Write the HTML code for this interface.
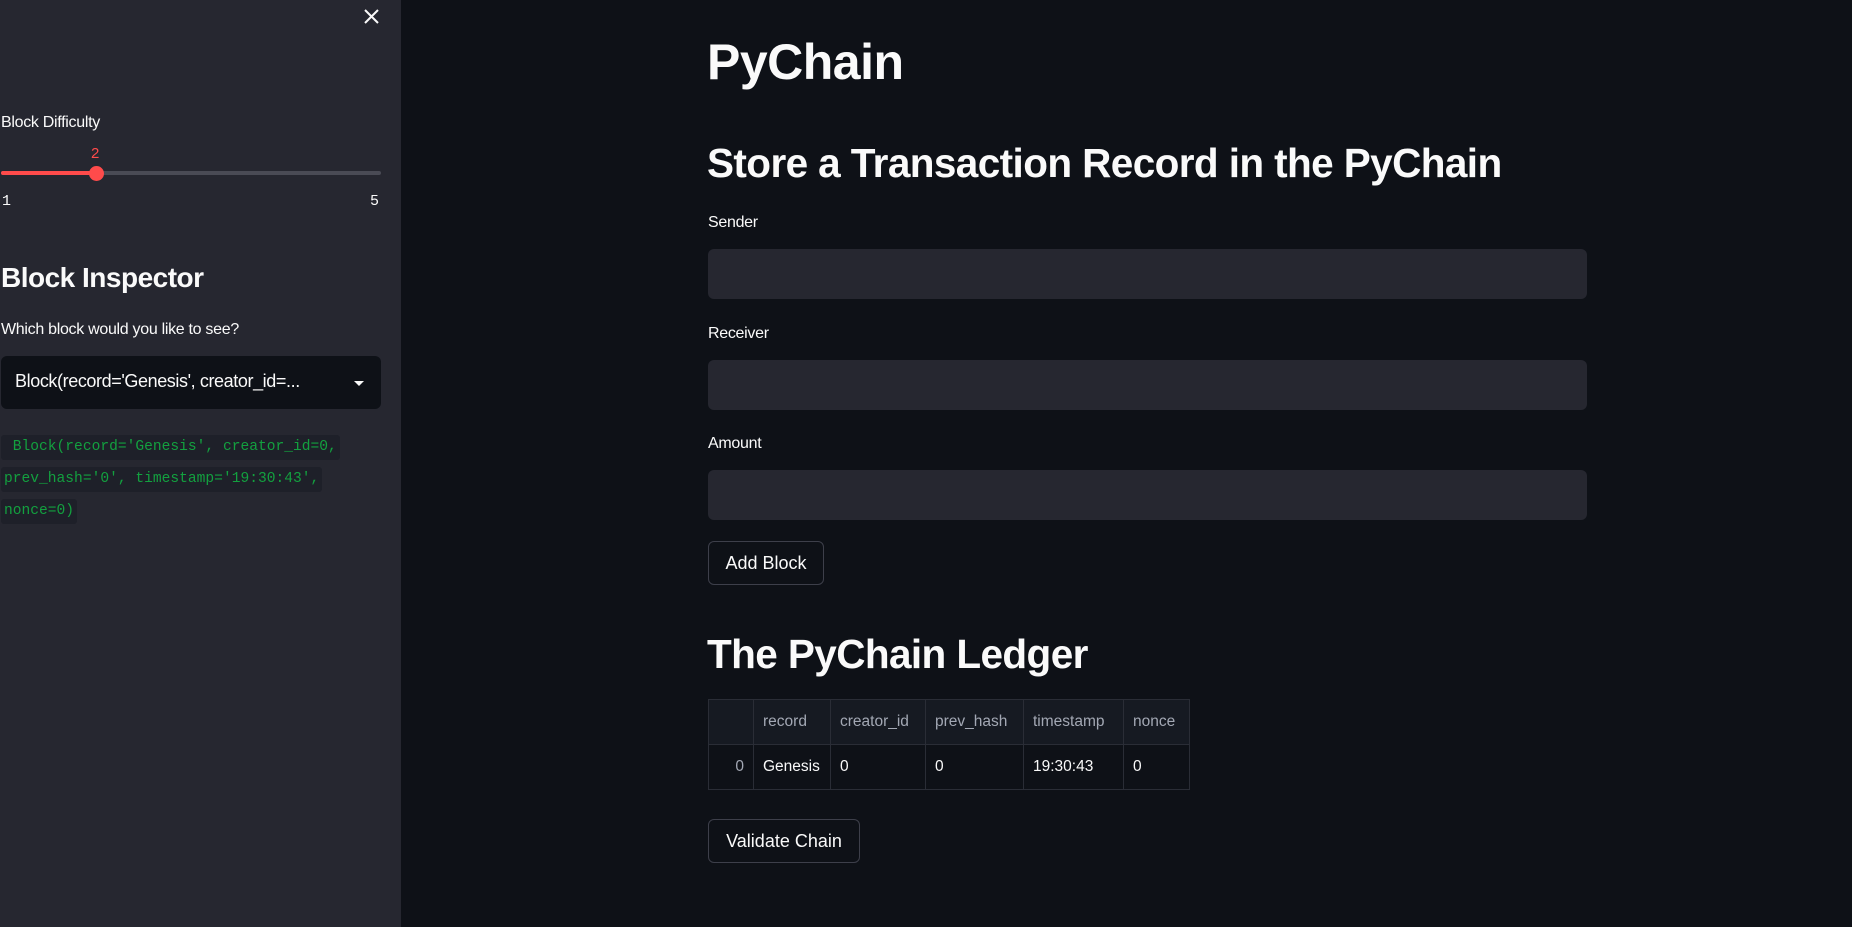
<!DOCTYPE html>
<html><head><style>
*{margin:0;padding:0;box-sizing:border-box}
body{width:1852px;height:927px;background:#0e1117;font-family:"Liberation Sans",sans-serif;color:#fafafa;position:relative;overflow:hidden}
.sb{position:absolute;left:0;top:0;width:401px;height:927px;background:#262730}
.a{position:absolute;white-space:nowrap}
.lbl{font-size:16px;letter-spacing:-0.3px}
.inp{position:absolute;left:708px;width:879px;height:50px;background:#262730;border-radius:6px}
.btn{position:absolute;left:708px;height:44px;border:1px solid #3d3f4a;border-radius:6px;font-size:18px;display:flex;align-items:center;justify-content:center;background:#0e1117}
.code{position:absolute;left:1px;background:#1e2029;color:#13a03f;font-family:"Liberation Mono",monospace;font-size:14.6px;height:25px;line-height:25px;padding:0 3px;border-radius:3px}
table{position:absolute;left:708px;top:699px;border-collapse:collapse;font-size:15.5px}
td{border:1px solid #2a2d36;height:45px;padding:0 9px}
tr.h td{color:#a3a8b4;background:#161a22}
</style></head><body>
<div class="sb">
<svg class="a" style="left:364px;top:9px" width="15" height="15" viewBox="0 0 15 15"><path d="M1 1L14 14M14 1L1 14" stroke="#fafafa" stroke-width="2"/></svg>
<div class="a lbl" style="left:1px;top:114px">Block Difficulty</div>
<div class="a" style="left:91px;top:145px;color:#ff4b4b;font-size:15px">2</div>
<div class="a" style="left:1px;top:171px;width:380px;height:4px;background:#4a4b55;border-radius:2px"></div>
<div class="a" style="left:1px;top:171px;width:95px;height:4px;background:#ff4b4b;border-radius:2px"></div>
<div class="a" style="left:89px;top:166px;width:15px;height:15px;background:#ff4b4b;border-radius:50%"></div>
<div class="a" style="left:2px;top:193px;font-size:15px;font-family:'Liberation Mono',monospace">1</div>
<div class="a" style="left:370px;top:193px;font-size:15px;font-family:'Liberation Mono',monospace">5</div>
<div class="a" style="left:1px;top:262px;font-size:28px;font-weight:bold;letter-spacing:-0.5px">Block Inspector</div>
<div class="a lbl" style="left:1px;top:321px">Which block would you like to see?</div>
<div class="a" style="left:1px;top:356px;width:380px;height:53px;background:#0e1117;border-radius:6px"></div>
<div class="a" style="left:15px;top:371px;font-size:18px;letter-spacing:-0.4px">Block(record='Genesis', creator_id=...</div>
<svg class="a" style="left:354px;top:381px" width="10" height="6"><path d="M0 0H10L5 5Z" fill="#fafafa"/></svg>
<div class="code" style="top:435px">&nbsp;Block(record='Genesis', creator_id=0,</div>
<div class="code" style="top:467px">prev_hash='0', timestamp='19:30:43',</div>
<div class="code" style="top:499px">nonce=0)</div>
</div>
<div class="a" style="left:707px;top:33px;font-size:50px;font-weight:bold;letter-spacing:-0.5px">PyChain</div>
<div class="a" style="left:707px;top:140px;font-size:40.5px;font-weight:bold;letter-spacing:-0.6px">Store a Transaction Record in the PyChain</div>
<div class="a lbl" style="left:708px;top:214px">Sender</div>
<div class="inp" style="top:249px"></div>
<div class="a lbl" style="left:708px;top:325px">Receiver</div>
<div class="inp" style="top:360px"></div>
<div class="a lbl" style="left:708px;top:435px">Amount</div>
<div class="inp" style="top:470px"></div>
<div class="btn" style="top:541px;width:116px">Add Block</div>
<div class="a" style="left:707px;top:631px;font-size:40.5px;font-weight:bold;letter-spacing:-0.6px">The PyChain Ledger</div>
<table>
<tr class="h"><td style="width:45px"></td><td style="width:77px">record</td><td style="width:95px">creator_id</td><td style="width:98px">prev_hash</td><td style="width:100px">timestamp</td><td style="width:66px">nonce</td></tr>
<tr><td style="text-align:right;color:#a3a8b4">0</td><td>Genesis</td><td>0</td><td>0</td><td>19:30:43</td><td>0</td></tr>
</table>
<div class="btn" style="top:819px;width:152px">Validate Chain</div>
</body></html>
